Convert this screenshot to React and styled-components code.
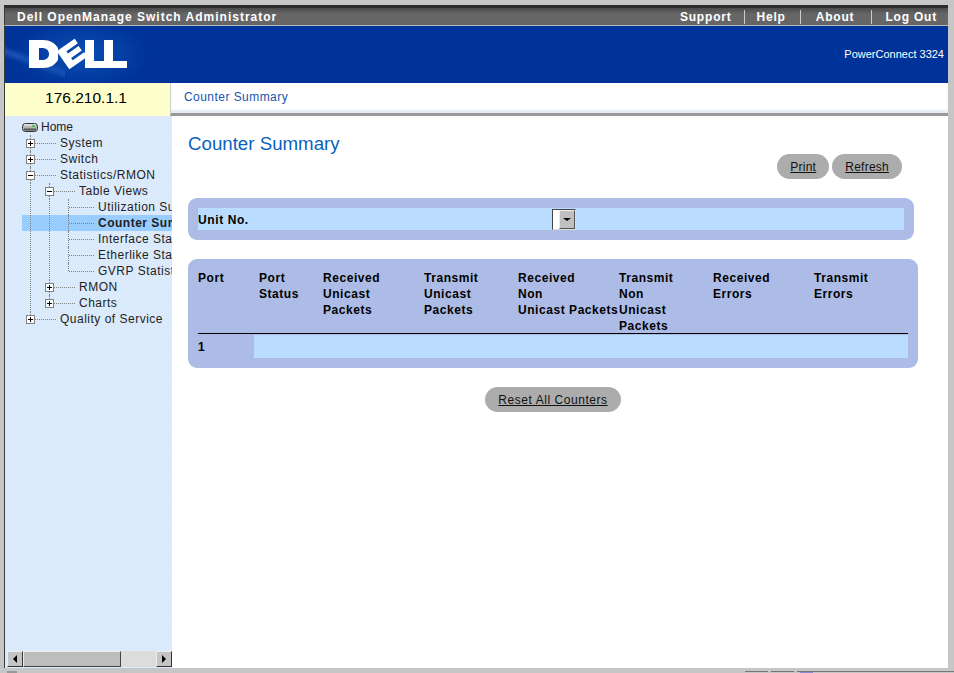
import styled, { createGlobalStyle } from "styled-components";

const GlobalStyle = createGlobalStyle`
  html, body {
    margin: 0;
    padding: 0;
    height: 100%;
    background: #c4c4c4;
  }
  body {
    font-family: "Liberation Sans", Arial, sans-serif;
    font-size: 12px;
    color: #000;
    overflow: hidden;
  }
`;

const dotted = `
  background-color: #b9dcff;
  background-image: radial-gradient(#acd0f4 0.6px, transparent 0.7px);
  background-size: 4px 4px;
`;

const navLinks = [
  { label: "Support", left: 0, right: 12 },
  { label: "Help", left: 12, right: 14 },
  { label: "About", left: 15, right: 17 },
  { label: "Log Out", left: 13, right: 0, last: true },
];

const tree = [
  { label: "System", toggle: "+", depth: 0 },
  { label: "Switch", toggle: "+", depth: 0 },
  { label: "Statistics/RMON", toggle: "-", depth: 0 },
  { label: "Table Views", toggle: "-", depth: 1 },
  { label: "Utilization Summary", depth: 2 },
  { label: "Counter Summary", depth: 2, selected: true },
  { label: "Interface Statistics", depth: 2 },
  { label: "Etherlike Statistics", depth: 2 },
  { label: "GVRP Statistics", depth: 2, last: true },
  { label: "RMON", toggle: "+", depth: 1 },
  { label: "Charts", toggle: "+", depth: 1, last: true },
  { label: "Quality of Service", toggle: "+", depth: 0, last: true },
];

const columns = [
  { key: "port", width: 61, lines: ["Port"] },
  { key: "status", width: 64, lines: ["Port", "Status"] },
  { key: "rxu", width: 101, lines: ["Received", "Unicast", "Packets"] },
  { key: "txu", width: 94, lines: ["Transmit", "Unicast", "Packets"] },
  { key: "rxn", width: 101, lines: ["Received", "Non", "Unicast Packets"] },
  { key: "txn", width: 94, lines: ["Transmit", "Non", "Unicast", "Packets"] },
  { key: "rxe", width: 101, lines: ["Received", "Errors"] },
  { key: "txe", width: 95, lines: ["Transmit", "Errors"] },
];

function DellLogo() {
  return (
    <svg width="100" height="32" viewBox="0 0 100 32" aria-label="Dell">
      <g fill="#fff">
        <path
          fillRule="evenodd"
          d="M0 2H14C21 2 26 5 29 10L29 22C26 27 21 30 14 30H0ZM10 10V22H13C17 22 20 20 20 16C20 12 17 10 13 10Z"
        />
        <g transform="rotate(-35 43 16)">
          <path d="M32 5H54V10.500H40V13.300H53V18.700H40V21.500H54V27H32Z" />
        </g>
        <path d="M56 2H65V23H76V30H56Z" />
        <path d="M75 2H84V23H98V30H75Z" />
      </g>
    </svg>
  );
}

function Toggle({ open }) {
  return (
    <svg width="9" height="9" viewBox="0 0 9 9">
      <rect x="0.5" y="0.5" width="8" height="8" fill="#fff" stroke="#808080" />
      <path d={open ? "M2 4.500h5" : "M2 4.500h5M4.500 2v5"} stroke="#000" />
    </svg>
  );
}

function HomeIcon() {
  return (
    <svg width="17" height="11" viewBox="0 0 17 11">
      <rect x="0.500" y="1.500" width="15" height="8" rx="3" fill="#b5b5b5" stroke="#333" />
      <path d="M2 3h12" stroke="#fff" />
      <path d="M2 7.500h12" stroke="#555" strokeWidth="2" />
      <path d="M10 4h3" stroke="#2fbf3f" strokeWidth="1.500" />
    </svg>
  );
}

function App() {
  return (
    <>
      <GlobalStyle />
      <Frame>
        <TitleBar>
          <AppTitle>Dell OpenManage Switch Administrator</AppTitle>
          <TopNav>
            {navLinks.map((link) => (
              <TopLink key={link.label} $left={link.left} $right={link.right} $last={link.last}>
                {link.label}
              </TopLink>
            ))}
          </TopNav>
        </TitleBar>
        <Banner>
          <LogoWrap>
            <DellLogo />
          </LogoWrap>
          <ProductName>PowerConnect 3324</ProductName>
        </Banner>
        <Workspace>
          <Side>
            <IpBox>176.210.1.1</IpBox>
            <TreePane>
              <TreeScroll>
                <TreeRow>
                  <HomeCell>
                    <HomeIcon />
                  </HomeCell>
                  <HomeLabel>Home</HomeLabel>
                </TreeRow>
                {tree.map((item) => (
                  <TreeRow key={item.label} $selected={item.selected}>
                    {Array.from({ length: item.depth }, (_, i) => (
                      <Guide key={i} />
                    ))}
                    <Branch $last={item.last}>
                      {item.toggle && <Toggle open={item.toggle === "-"} />}
                    </Branch>
                    <TreeLabel $selected={item.selected}>{item.label}</TreeLabel>
                  </TreeRow>
                ))}
              </TreeScroll>
              <Scrollbar>
                <ScrollButton>
                  <ArrowLeft />
                </ScrollButton>
                <ScrollThumb />
                <ScrollTrack />
                <ScrollButton>
                  <ArrowRight />
                </ScrollButton>
              </Scrollbar>
            </TreePane>
          </Side>
          <Main>
            <Crumb>Counter Summary</Crumb>
            <Content>
              <PageTitle>Counter Summary</PageTitle>
              <ActionRow>
                <PillButton $spacing={0.25}>Print</PillButton>
                <PillButton $spacing={0.25}>Refresh</PillButton>
              </ActionRow>
              <UnitPanel>
                <UnitRow>
                  <UnitLabel>Unit No.</UnitLabel>
                  <FakeSelect>
                    <SelectValue />
                    <SelectButton>
                      <SelectArrow />
                    </SelectButton>
                  </FakeSelect>
                </UnitRow>
              </UnitPanel>
              <TablePanel>
                <HeadRow>
                  {columns.map((col) => (
                    <HeadCell key={col.key} $width={col.width}>
                      {col.lines.map((line) => (
                        <div key={line}>{line}</div>
                      ))}
                    </HeadCell>
                  ))}
                </HeadRow>
                <BodyRow>
                  <PortCell>1</PortCell>
                  <DataCell />
                </BodyRow>
              </TablePanel>
              <BottomRow>
                <PillButton $spacing={0.55}>Reset All Counters</PillButton>
              </BottomRow>
            </Content>
          </Main>
        </Workspace>
        <StatusStrip>
          <StatusLeft />
          <StatusGap />
          <StatusSlot />
          <StatusSlot />
          <StatusTray>
            <StatusChip />
          </StatusTray>
        </StatusStrip>
      </Frame>
    </>
  );
}

export default App;

const Frame = styled.div`
  box-sizing: border-box;
  width: 954px;
  height: 673px;
  padding: 5px 6px 0 4px;
  background: #c6c6c6;
  display: flex;
  flex-direction: column;
`;
const TitleBar = styled.div`
  flex: none;
  height: 21px;
  box-sizing: border-box;
  border-top: 3px solid #2c2c2c;
  border-left: 1px solid #3a3a3a;
  border-bottom: 1px solid #b8b8b8;
  background: linear-gradient(#4c4c4c, #666 35%, #666);
  display: flex;
  align-items: center;
  justify-content: space-between;
  padding: 0 11px 0 12px;
  color: #fff;
  font-weight: bold;
  font-size: 12px;
  letter-spacing: 1px;
`;
const AppTitle = styled.div``;
const TopNav = styled.div`
  display: flex;
  align-items: center;
  letter-spacing: 0.8px;
`;
const TopLink = styled.div`
  padding: 0 ${(p) => p.$right}px 0 ${(p) => p.$left}px;
  border-right: ${(p) => (p.$last ? "none" : "1px solid #ccc")};
  line-height: 14px;
`;
const Banner = styled.div`
  flex: none;
  height: 57px;
  border-left: 1px solid #3a3a3a;
  background-color: #003399;
  background-image:
    radial-gradient(ellipse 70px 34px at 76px 28px, #0a4fb4 0%, rgba(0, 51, 153, 0) 100%),
    linear-gradient(200deg, rgba(0, 51, 153, 0) 52%, rgba(70, 130, 220, 0.4) 60%, rgba(0, 51, 153, 0) 68%);
  background-size: 140px 57px, 60px 57px;
  background-repeat: no-repeat;
  display: flex;
  align-items: center;
  justify-content: space-between;
  padding: 0 4px 0 24px;
`;
const LogoWrap = styled.div`
  display: flex;
  margin-top: -1px;
`;
const ProductName = styled.div`
  color: #fff;
  font-size: 11px;
  margin-top: -2px;
`;
const Workspace = styled.div`
  flex: 1;
  min-height: 0;
  display: flex;
  background: #fff;
  border-left: 1px solid #3a3a3a;
`;
const Side = styled.div`
  flex: none;
  width: 167px;
  display: flex;
  flex-direction: column;
`;
const IpBox = styled.div`
  flex: none;
  height: 33px;
  width: 165px;
  background: #ffffcc;
  display: flex;
  align-items: center;
  justify-content: center;
  font-size: 15.5px;
  padding: 0 3px 4px 0;
  box-sizing: border-box;
`;
const TreePane = styled.div`
  flex: 1;
  min-height: 0;
  display: flex;
  flex-direction: column;
  background-color: #dcebfb;
  background-image: radial-gradient(#d6e6f8 0.6px, transparent 0.7px);
  background-size: 3px 3px;
`;
const TreeScroll = styled.div`
  flex: 1;
  min-height: 0;
  padding: 3px 0 0 17px;
  overflow: hidden;
`;
const TreeRow = styled.div`
  height: 16px;
  display: flex;
  align-items: center;
  white-space: nowrap;
  background: ${(p) => (p.$selected ? "#99ccff" : "transparent")};
`;
const HomeCell = styled.div`
  flex: none;
  width: 19px;
  display: flex;
`;
const HomeLabel = styled.span`
  color: #222;
`;
const Guide = styled.div`
  flex: none;
  width: 19px;
  height: 16px;
  background: linear-gradient(#808080 50%, transparent 50%) 8px 0 / 1px 2px repeat-y;
`;
const Branch = styled.div`
  position: relative;
  flex: none;
  width: 38px;
  height: 16px;
  display: flex;
  align-items: center;
  padding-left: 4px;
  box-sizing: border-box;
  &::before {
    content: "";
    position: absolute;
    left: 8px;
    top: 0;
    height: ${(p) => (p.$last ? "8px" : "16px")};
    border-left: 1px dotted #808080;
  }
  &::after {
    content: "";
    position: absolute;
    left: 9px;
    top: 8px;
    width: 25px;
    border-top: 1px dotted #808080;
  }
  & > svg {
    position: relative;
    z-index: 1;
    flex: none;
  }
`;
const TreeLabel = styled.span`
  flex: 1;
  overflow: hidden;
  font-weight: ${(p) => (p.$selected ? "bold" : "normal")};
  letter-spacing: 0.5px;
  color: #222;
`;
const Scrollbar = styled.div`
  flex: none;
  height: 16px;
  margin: 0 0 1px 2px;
  display: flex;
  background: #dcdcdc;
`;
const ScrollButton = styled.div`
  flex: none;
  width: 16px;
  box-sizing: border-box;
  background: #c4c4c4;
  border: 1px solid;
  border-color: #eee #333 #333 #eee;
  display: flex;
  align-items: center;
  justify-content: center;
`;
const ScrollThumb = styled.div`
  flex: none;
  width: 98px;
  box-sizing: border-box;
  background: #bdbdbd;
  border: 1px solid;
  border-color: #eee #444 #444 #eee;
`;
const ScrollTrack = styled.div`
  flex: 1;
`;
const ArrowLeft = styled.div`
  width: 0;
  height: 0;
  border-style: solid;
  border-width: 4px 4px 4px 0;
  border-color: transparent #000 transparent transparent;
`;
const ArrowRight = styled.div`
  width: 0;
  height: 0;
  border-style: solid;
  border-width: 4px 0 4px 4px;
  border-color: transparent transparent transparent #000;
`;
const Main = styled.div`
  flex: 1;
  min-width: 0;
  display: flex;
  flex-direction: column;
`;
const Crumb = styled.div`
  flex: none;
  height: 33px;
  box-sizing: border-box;
  margin-left: -2px;
  padding: 7px 0 0 13px;
  color: #1a55b0;
  font-size: 12px;
  letter-spacing: 0.45px;
  background: #fff;
  border-left: 1px solid #d0d0d0;
  border-bottom: 3px solid #9a9a9a;
  box-shadow: inset 0 -3px 2px #e6ecf5;
`;
const Content = styled.div`
  flex: 1;
  padding: 16px 30px 0 16px;
`;
const PageTitle = styled.div`
  color: #0b5fc0;
  font-size: 18.7px;
  line-height: 24px;
`;
const ActionRow = styled.div`
  display: flex;
  justify-content: flex-end;
  gap: 3px;
  margin: -2px 16px 19px 0;
`;
const PillButton = styled.div`
  height: 25px;
  box-sizing: border-box;
  padding: 0 13px;
  border-radius: 13px;
  background: #acacac;
  color: #111;
  font-size: 12px;
  letter-spacing: ${(p) => p.$spacing}px;
  line-height: 27px;
  text-decoration: underline;
`;
const UnitPanel = styled.div`
  background: #adbce6;
  border-radius: 9px;
  padding: 10px;
  margin-right: 4px;
`;
const TablePanel = styled.div`
  background: #adbce6;
  border-radius: 9px;
  padding: 10px;
  margin-top: 19px;
`;
const UnitRow = styled.div`
  ${dotted}
  height: 22px;
  display: flex;
  align-items: center;
`;
const UnitLabel = styled.div`
  width: 354px;
  padding-top: 2px;
  font-weight: bold;
  font-size: 12px;
  letter-spacing: 0.6px;
`;
const FakeSelect = styled.div`
  width: 24px;
  height: 21px;
  box-sizing: border-box;
  display: flex;
  border: 1px solid;
  border-color: #444 #ddd #ddd #444;
`;
const SelectValue = styled.div`
  width: 6px;
  background: #fff;
`;
const SelectButton = styled.div`
  flex: 1;
  background: #c0c0c0;
  border: 1px solid;
  border-color: #eee #555 #555 #eee;
  display: flex;
  align-items: center;
  justify-content: center;
`;
const SelectArrow = styled.div`
  width: 0;
  height: 0;
  border-style: solid;
  border-width: 3px 4px 0;
  border-color: #000 transparent transparent;
`;
const HeadRow = styled.div`
  display: flex;
  border-bottom: 1px solid #000;
  height: 63px;
  padding-top: 1px;
`;
const HeadCell = styled.div`
  flex: none;
  width: ${(p) => p.$width}px;
  box-sizing: border-box;
  font-weight: bold;
  font-size: 12px;
  letter-spacing: 0.55px;
  line-height: 16px;
  white-space: nowrap;
`;
const BodyRow = styled.div`
  display: flex;
  box-sizing: border-box;
  height: 24px;
  padding-top: 1px;
`;
const PortCell = styled.div`
  flex: none;
  width: 56px;
  font-weight: bold;
  font-size: 12px;
  line-height: 25px;
`;
const DataCell = styled.div`
  ${dotted}
  flex: 1;
`;
const BottomRow = styled.div`
  display: flex;
  justify-content: center;
  margin-top: 19px;
`;
const StatusStrip = styled.div`
  flex: none;
  height: 5px;
  margin-right: -6px;
  display: flex;
  background: #c6c6c6;
`;
const StatusLeft = styled.div`
  width: 10px;
  margin: 3px 0 0 3px;
  background: #989898;
`;
const StatusGap = styled.div`
  flex: 1;
`;
const StatusSlot = styled.div`
  width: 23px;
  margin: 3px 3px 0 0;
  border-top: 1px solid #777;
`;
const StatusTray = styled.div`
  width: 154px;
  margin-top: 3px;
  border-top: 1px solid #777;
  padding-left: 3px;
`;
const StatusChip = styled.div`
  width: 13px;
  height: 2px;
  background: #8a8ad0;
`;
